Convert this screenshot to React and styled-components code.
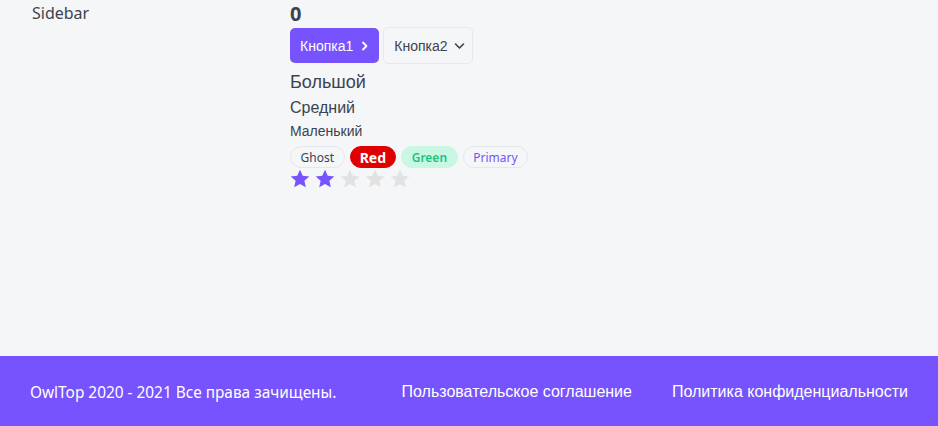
import React from 'react';
import styled, { createGlobalStyle } from 'styled-components';

const GlobalStyle = createGlobalStyle`
  body {
    margin: 0;
    font-family: "Noto Sans", sans-serif;
    background: #f5f6f8;
    color: #3b434e;
  }
`;

const Page = styled.div`
  min-height: 100vh;
  display: grid;
  grid-template-columns: 290px 1fr;
  grid-template-rows: 1fr auto;
  grid-template-areas:
    'sidebar body'
    'footer footer';
`;

const Sidebar = styled.div`
  grid-area: sidebar;
  padding: 2px 0 0 32px;
  font-size: 16px;
  line-height: 22px;
`;

const Body = styled.main`
  grid-area: body;
  display: flex;
  flex-direction: column;
  align-items: flex-start;
`;

const Counter = styled.div`
  font-size: 20px;
  font-weight: 700;
  line-height: 28px;
`;

const ButtonRow = styled.div`
  display: flex;
  gap: 4px;
`;

const Button = styled.button`
  display: flex;
  align-items: center;
  gap: ${p => (p.$appearance === 'primary' ? '8px' : '6px')};
  height: ${p => (p.$appearance === 'primary' ? '35px' : '37px')};
  margin-top: ${p => (p.$appearance === 'primary' ? '0' : '-1px')};
  padding: ${p => (p.$appearance === 'primary' ? '0 10px' : '0 7px 0 10px')};
  border-radius: 5px;
  font-family: "Liberation Sans", Arial, sans-serif;
  font-size: 14px;
  cursor: pointer;
  border: ${p => (p.$appearance === 'primary' ? 'none' : '1px solid #e8e8ee')};
  background: ${p => (p.$appearance === 'primary' ? '#7653fc' : '#f5f6f8')};
  color: ${p => (p.$appearance === 'primary' ? '#ffffff' : '#3b434e')};
`;

const Heading = styled.div`
  font-family: "Liberation Sans", Arial, sans-serif;
  font-size: ${p => p.$size}px;
  line-height: ${p => p.$lh}px;
  margin-top: ${p => p.$mt}px;
`;

const TagRow = styled.div`
  display: flex;
  gap: 5px;
  margin-top: 6px;
`;

const tagColors = {
  ghost: { bg: 'transparent', border: '#e6e6ec', color: '#3b434e' },
  red: { bg: '#e10000', border: '#e10000', color: '#ffffff' },
  green: { bg: '#c8f8e4', border: '#c8f8e4', color: '#1cc37e' },
  primary: { bg: 'transparent', border: '#e6e6ec', color: '#7653fc' },
};

const Tag = styled.span`
  box-sizing: border-box;
  height: 22px;
  display: inline-flex;
  align-items: center;
  padding: 0 ${p => (p.$color === 'red' ? 9 : 9.6)}px;
  border-radius: 20px;
  border: 1px solid ${p => tagColors[p.$color].border};
  background: ${p => tagColors[p.$color].bg};
  color: ${p => tagColors[p.$color].color};
  font-size: ${p => (p.$color === 'red' ? 14 : 12)}px;
  font-weight: ${p => (p.$color === 'red' ? 700 : p.$color === 'green' ? 600 : 400)};
`;

const Stars = styled.div`
  display: flex;
  gap: 5px;
  margin-top: 1px;
`;

const Star = styled.svg`
  width: 20px;
  height: 20px;
  fill: ${p => (p.$filled ? '#7653fc' : '#e2e2e2')};
`;

const Footer = styled.footer`
  grid-area: footer;
  height: 70px;
  box-sizing: border-box;
  padding: 2px 30px 0;
  display: grid;
  grid-template-columns: 1fr auto auto;
  column-gap: 40px;
  align-items: center;
  background: #7653fc;
  color: #ffffff;
  font-size: 16px;
`;

const Copyright = styled.span`
  font-size: 15.4px;
`;

const FooterLink = styled.a`
  color: #ffffff;
  text-decoration: none;
  font-family: "Liberation Sans", Arial, sans-serif;
`;

const ChevronRight = () => (
  <svg width="8" height="10" viewBox="0 0 8 10" fill="none" stroke="currentColor" strokeWidth="1.8" strokeLinecap="round" strokeLinejoin="round">
    <path d="M2 1.5 5.5 5 2 8.5" />
  </svg>
);

const ChevronDown = () => (
  <svg width="11" height="8" viewBox="0 0 11 8" fill="none" stroke="currentColor" strokeWidth="1.6" strokeLinecap="round" strokeLinejoin="round">
    <path d="M1.5 2 5.5 6 9.5 2" />
  </svg>
);

const StarIcon = ({ filled }) => (
  <Star $filled={filled} viewBox="0 0 20 20">
    <path d="M10 0.8l2.75 6.05 6.6.62-4.98 4.4 1.45 6.5L10 15l-5.82 3.37 1.45-6.5L.65 7.470l6.6-.62z" />
  </Star>
);

const App = () => {
  const rating = 2;
  return (
    <>
      <GlobalStyle />
      <Page>
        <Sidebar>Sidebar</Sidebar>
        <Body>
          <Counter>0</Counter>
          <ButtonRow>
            <Button $appearance="primary">
              Кнопка1 <ChevronRight />
            </Button>
            <Button $appearance="ghost">
              Кнопка2 <ChevronDown />
            </Button>
          </ButtonRow>
          <Heading $size={18} $lh={24} $mt={6}>Большой</Heading>
          <Heading $size={16} $lh={20} $mt={4}>Средний</Heading>
          <Heading $size={14} $lh={18} $mt={4}>Маленький</Heading>
          <TagRow>
            <Tag $color="ghost">Ghost</Tag>
            <Tag $color="red">Red</Tag>
            <Tag $color="green">Green</Tag>
            <Tag $color="primary">Primary</Tag>
          </TagRow>
          <Stars>
            {[0, 1, 2, 3, 4].map(i => (
              <StarIcon key={i} filled={i < rating} />
            ))}
          </Stars>
        </Body>
        <Footer>
          <Copyright>OwlTop 2020 - 2021 Все права зачищены.</Copyright>
          <FooterLink href="#">Пользовательское соглашение</FooterLink>
          <FooterLink href="#">Политика конфиденциальности</FooterLink>
        </Footer>
      </Page>
    </>
  );
};

export default App;
